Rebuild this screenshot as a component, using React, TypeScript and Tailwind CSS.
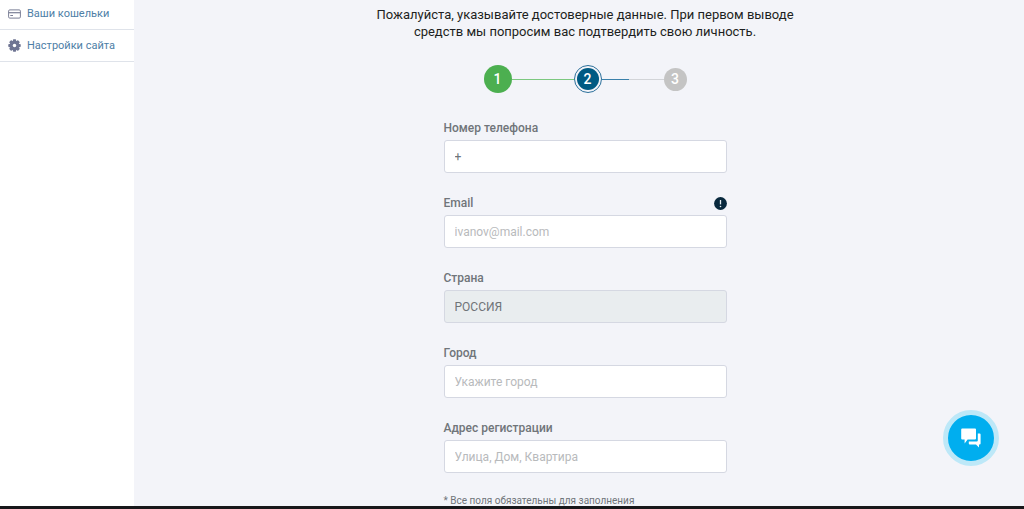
import type { ReactNode } from "react";

const circle = "flex items-center justify-center rounded-full text-sm font-medium text-white";

function CardIcon() {
  return (
    <svg viewBox="0 0 13 10" className="h-[10px] w-[13px] shrink-0" fill="none" stroke="#7b7f96" aria-hidden="true">
      <rect x="0.6" y="0.9" width="11.8" height="8.2" rx="1.2" strokeWidth="1" />
      <path d="M0.6 3.7H12.4" strokeWidth="1.2" />
      <path d="M2.3 6.5H5" strokeWidth="1" />
    </svg>
  );
}

function GearIcon() {
  return (
    <svg viewBox="0 0 24 24" className="h-[13px] w-[13px] shrink-0" fill="#6f7593" aria-hidden="true">
      <g>
        <rect x="9" y="0.5" width="6" height="23" rx="1.5" />
        <rect x="9" y="0.5" width="6" height="23" rx="1.5" transform="rotate(45 12 12)" />
        <rect x="9" y="0.5" width="6" height="23" rx="1.5" transform="rotate(90 12 12)" />
        <rect x="9" y="0.5" width="6" height="23" rx="1.5" transform="rotate(135 12 12)" />
        <circle cx="12" cy="12" r="9" />
      </g>
      <circle cx="12" cy="12" r="3.2" fill="#fff" />
    </svg>
  );
}

function ChatIcon() {
  return (
    <svg viewBox="0 0 20 20" className="h-5 w-5" fill="#fff" aria-hidden="true">
      <path d="M1.2 0.6H14a1 1 0 0 1 1 1V10.4a1 1 0 0 1-1 1H6.6L3.6 15.4V11.4H1.2a1 1 0 0 1-1-1V1.6a1 1 0 0 1 1-1Z" />
      <path d="M16.8 5.6H18.6a1 1 0 0 1 1 1V15.4a1 1 0 0 1-1 1H18V19.4L15 16.4H8.8a1 1 0 0 1-1-1V13.4H15.8a1 1 0 0 0 1-1Z" />
    </svg>
  );
}

function AlertIcon() {
  return (
    <svg viewBox="0 0 13 13" className="h-[13px] w-[13px]" aria-hidden="true">
      <circle cx="6.5" cy="6.5" r="6.4" fill="#08283d" />
      <path d="M6.5 3V7.4" stroke="#e6edf2" strokeWidth="1.3" />
      <circle cx="6.5" cy="9.5" r="0.8" fill="#e6edf2" />
    </svg>
  );
}

type FieldProps = {
  id: string;
  label: string;
  type?: string;
  value?: string;
  placeholder?: string;
  disabled?: boolean;
  hint?: ReactNode;
};

function Field({ id, label, type = "text", value, placeholder, disabled, hint }: FieldProps) {
  return (
    <div>
      <div className="flex h-4 items-center justify-between">
        <label htmlFor={id} className="text-xs font-medium text-[#70757a]">
          {label}
        </label>
        {hint}
      </div>
      <input
        id={id}
        type={type}
        defaultValue={value}
        placeholder={placeholder}
        disabled={disabled}
        className="mt-1 block h-[33px] w-full rounded-[3px] border border-[#d5d8e2] bg-white px-2.5 text-xs text-[#6f7478] placeholder:text-[#b8babc] disabled:bg-[#e9edef]"
      />
    </div>
  );
}

export default function App() {
  return (
    <div className="flex h-screen flex-col overflow-hidden bg-[#f3f4f9] font-[Roboto,sans-serif]">
      <div className="flex min-h-0 flex-1 overflow-hidden">
        <nav className="w-[134px] shrink-0 bg-white text-[11px] leading-[18px] text-[#4d7ea6]">
          <a href="#wallets" className="flex h-[30px] items-center gap-1.5 border-b border-[#dfe3ea] pb-0.5 pl-2">
            <CardIcon />
            Ваши кошельки
          </a>
          <a href="#settings" className="flex h-8 items-center gap-1.5 border-b border-[#dfe3ea] pl-2">
            <GearIcon />
            Настройки сайта
          </a>
        </nav>
        <main className="flex flex-1 flex-col items-center overflow-hidden pl-3 pt-1.5">
          <p className="text-center text-[13px] leading-[17px] text-[#1d1f21]">
            Пожалуйста, указывайте достоверные данные. При первом выводе
            <br />
            средств мы попросим вас подтвердить свою личность.
          </p>
          <ol className="mt-[25px] flex w-[203px] items-center">
            <li className={`${circle} h-7 w-7 bg-[#4caf50]`}>1</li>
            <li className="h-px flex-1 bg-[#7cc880]" aria-hidden="true" />
            <li className="rounded-full border border-[#2c709b] p-0.5">
              <span className={`${circle} h-[22px] w-[22px] bg-[#005a83]`}>2</span>
            </li>
            <li className="flex flex-1" aria-hidden="true">
              <span className="h-px w-[27px] bg-[#3a80aa]" />
              <span className="h-px flex-1 bg-[#d2d4d8]" />
            </li>
            <li className={`${circle} h-[23px] w-[23px] bg-[#c4c4c4]`}>3</li>
          </ol>
          <form className="mt-[27px] flex w-[283px] flex-col gap-[22px]">
            <Field id="phone" label="Номер телефона" type="tel" value="+" />
            <Field
              id="email"
              label="Email"
              type="email"
              placeholder="ivanov@mail.com"
              hint={
                <button type="button" aria-label="Email">
                  <AlertIcon />
                </button>
              }
            />
            <Field id="country" label="Страна" value="РОССИЯ" disabled />
            <Field id="city" label="Город" placeholder="Укажите город" />
            <Field id="address" label="Адрес регистрации" placeholder="Улица, Дом, Квартира" />
            <p className="text-[10px] leading-3 text-[#70757a]">* Все поля обязательны для заполнения</p>
          </form>
        </main>
      </div>
      <button
        type="button"
        aria-label="Чат"
        className="fixed bottom-[43px] right-[25px] flex h-14 w-14 items-center justify-center rounded-full border-[5px] border-[#bde8f8] bg-[#00aeef]"
      >
        <ChatIcon />
      </button>
      <div className="h-[3px] shrink-0 bg-[#17171a]" />
    </div>
  );
}
